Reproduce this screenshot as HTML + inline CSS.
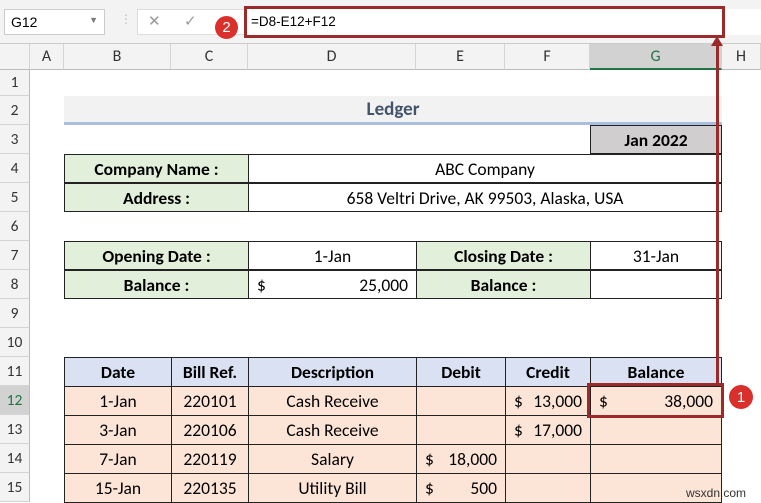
<!DOCTYPE html><html><head><style>
body{margin:0;width:761px;height:501px;overflow:hidden;background:#fff;font-family:Calibri,"Liberation Sans",sans-serif;position:relative}
div{position:absolute;box-sizing:border-box}
.c{font-size:17.5px;display:flex;align-items:center;justify-content:center;color:#000;white-space:nowrap}
.b{font-weight:bold}
.bd{border:1px solid #222}
.g{background:#e2efda}.o{background:#fce4d6}.h{background:#d9e1f2}
.sb{justify-content:space-between;padding:0 8px}
.rh{left:0;width:30px;font-size:15.5px;color:#333;display:flex;align-items:center;justify-content:center;border-bottom:1px solid #d4d4d4;border-right:1px solid #bbb;background:#f3f3f3}
.ch{top:44px;height:26px;font-size:16px;color:#333;display:flex;align-items:center;justify-content:center;border-right:1px solid #d4d4d4;border-bottom:1px solid #bbb;background:#f3f3f3}
</style></head><body>
<div style="left:0;top:0;width:761px;height:44px;background:#f3f3f3;border-bottom:1px solid #ccc"></div>
<div style="left:4px;top:9px;width:101px;height:26px;background:#fff;border:1px solid #ccc;font-size:14px;padding:4px 6px;font-family:'Liberation Sans',sans-serif">G12<span style="position:absolute;right:6px;top:5px;font-size:9px;color:#777">▼</span></div>
<div style="left:120px;top:12px;color:#bbb;font-size:12px">⋮</div>
<div style="left:137px;top:9px;width:108px;height:26px;background:#fff;border:1px solid #ddd"></div>
<div style="left:148px;top:12px;color:#999;font-size:15px">✕</div>
<div style="left:184px;top:12px;color:#999;font-size:15px">✓</div>
<div style="left:245px;top:9px;width:516px;height:26px;background:#fff"></div>
<div style="left:251px;top:14px;font-size:13.5px;font-family:'Liberation Sans',sans-serif">=D8-E12+F12</div>
<div style="left:244px;top:6px;width:481px;height:32px;border:3px solid #9b2b2b"></div>
<div style="left:215px;top:16px;width:23px;height:23px;border-radius:50%;background:#d9302c;color:#fff;font-size:15px;display:flex;align-items:center;justify-content:center;font-family:'Liberation Sans',sans-serif">2</div>
<div class="ch" style="left:0;width:30px;background:#f3f3f3"></div>
<div class="ch" style="left:30px;width:34px">A</div>
<div class="ch" style="left:64px;width:107px">B</div>
<div class="ch" style="left:171px;width:77px">C</div>
<div class="ch" style="left:248px;width:168px">D</div>
<div class="ch" style="left:416px;width:89px">E</div>
<div class="ch" style="left:505px;width:85px">F</div>
<div class="ch" style="left:590px;width:132px;background:#d2d2d2;border-bottom:2px solid #217346;color:#217346">G</div>
<div class="ch" style="left:722px;width:39px">H</div>
<div class="rh" style="top:70px;height:26px">1</div>
<div class="rh" style="top:96px;height:29px">2</div><div class="rh" style="top:125px;height:29px">3</div><div class="rh" style="top:154px;height:29px">4</div><div class="rh" style="top:183px;height:29px">5</div><div class="rh" style="top:212px;height:29px">6</div><div class="rh" style="top:241px;height:29px">7</div><div class="rh" style="top:270px;height:29px">8</div><div class="rh" style="top:299px;height:29px">9</div><div class="rh" style="top:328px;height:29px">10</div><div class="rh" style="top:357px;height:29px">11</div><div class="rh" style="top:386px;height:29px;background:#d2d2d2;color:#217346">12</div><div class="rh" style="top:415px;height:29px">13</div><div class="rh" style="top:444px;height:29px">14</div><div class="rh" style="top:473px;height:29px">15</div>
<div class="c b" style="left:64px;top:96px;width:658px;height:29px;background:#f2f2f2;border-bottom:3px solid #a9bfe0;color:#44546a;font-size:19px">Ledger</div>
<div class="c b bd" style="left:590px;top:125px;width:132px;height:29px;background:#d0cece">Jan 2022</div>
<div class="c b bd g" style="left:64px;top:154px;width:185px;height:29px">Company Name :</div>
<div class="c bd" style="left:248px;top:154px;width:474px;height:29px">ABC Company</div>
<div class="c b bd g" style="left:64px;top:183px;width:185px;height:29px">Address :</div>
<div class="c bd" style="left:248px;top:183px;width:474px;height:29px">658 Veltri Drive, AK 99503, Alaska, USA</div>
<div class="c b bd g" style="left:64px;top:241px;width:185px;height:29px">Opening Date :</div>
<div class="c bd" style="left:248px;top:241px;width:169px;height:29px">1-Jan</div>
<div class="c b bd g" style="left:416px;top:241px;width:175px;height:29px">Closing Date :</div>
<div class="c bd" style="left:590px;top:241px;width:132px;height:29px">31-Jan</div>
<div class="c b bd g" style="left:64px;top:270px;width:185px;height:29px">Balance :</div>
<div class="c bd sb" style="left:248px;top:270px;width:169px;height:29px">$<span>25,000</span></div>
<div class="c b bd g" style="left:416px;top:270px;width:175px;height:29px">Balance :</div>
<div class="c bd" style="left:590px;top:270px;width:132px;height:29px"></div>
<div class="c b bd h" style="left:64px;top:357px;width:108px;height:30px">Date</div>
<div class="c b bd h" style="left:171px;top:357px;width:78px;height:30px">Bill Ref.</div>
<div class="c b bd h" style="left:248px;top:357px;width:169px;height:30px">Description</div>
<div class="c b bd h" style="left:416px;top:357px;width:90px;height:30px">Debit</div>
<div class="c b bd h" style="left:505px;top:357px;width:86px;height:30px">Credit</div>
<div class="c b bd h" style="left:590px;top:357px;width:132px;height:30px">Balance</div>

<div class="c bd o" style="left:64px;top:386px;width:108px;height:30px">1-Jan</div><div class="c bd o" style="left:171px;top:386px;width:78px;height:30px">220101</div><div class="c bd o" style="left:248px;top:386px;width:169px;height:30px">Cash Receive</div><div class="c bd o" style="left:416px;top:386px;width:90px;height:30px"></div><div class="c bd o sb" style="left:505px;top:386px;width:86px;height:30px">$<span>13,000</span></div><div class="c bd o sb" style="left:590px;top:386px;width:132px;height:30px">$<span>38,000</span></div>
<div class="c bd o" style="left:64px;top:415px;width:108px;height:30px">3-Jan</div><div class="c bd o" style="left:171px;top:415px;width:78px;height:30px">220106</div><div class="c bd o" style="left:248px;top:415px;width:169px;height:30px">Cash Receive</div><div class="c bd o" style="left:416px;top:415px;width:90px;height:30px"></div><div class="c bd o sb" style="left:505px;top:415px;width:86px;height:30px">$<span>17,000</span></div><div class="c bd o" style="left:590px;top:415px;width:132px;height:30px"></div>
<div class="c bd o" style="left:64px;top:444px;width:108px;height:30px">7-Jan</div><div class="c bd o" style="left:171px;top:444px;width:78px;height:30px">220119</div><div class="c bd o" style="left:248px;top:444px;width:169px;height:30px">Salary</div><div class="c bd o sb" style="left:416px;top:444px;width:90px;height:30px">$<span>18,000</span></div><div class="c bd o" style="left:505px;top:444px;width:86px;height:30px"></div><div class="c bd o" style="left:590px;top:444px;width:132px;height:30px"></div>
<div class="c bd o" style="left:64px;top:473px;width:108px;height:30px">15-Jan</div><div class="c bd o" style="left:171px;top:473px;width:78px;height:30px">220135</div><div class="c bd o" style="left:248px;top:473px;width:169px;height:30px">Utility Bill</div><div class="c bd o sb" style="left:416px;top:473px;width:90px;height:30px">$<span>500</span></div><div class="c bd o" style="left:505px;top:473px;width:86px;height:30px"></div><div class="c bd o" style="left:590px;top:473px;width:132px;height:30px"></div>
<div style="left:587px;top:383px;width:137px;height:35px;border:3px solid #9b2b2b"></div>
<div style="left:716px;top:44px;width:3px;height:340px;background:#9b2b2b"></div>
<div style="left:711px;top:36px;width:0;height:0;border-left:6px solid transparent;border-right:6px solid transparent;border-bottom:10px solid #9b2b2b"></div>
<div style="left:729px;top:385px;width:24px;height:24px;border-radius:50%;background:#d9302c;color:#fff;font-size:15px;display:flex;align-items:center;justify-content:center;font-family:'Liberation Sans',sans-serif">1</div>
<div style="left:686px;top:486px;font-size:12px;font-family:'Liberation Sans',sans-serif;color:#333">wsxdn.com</div>
</body></html>
